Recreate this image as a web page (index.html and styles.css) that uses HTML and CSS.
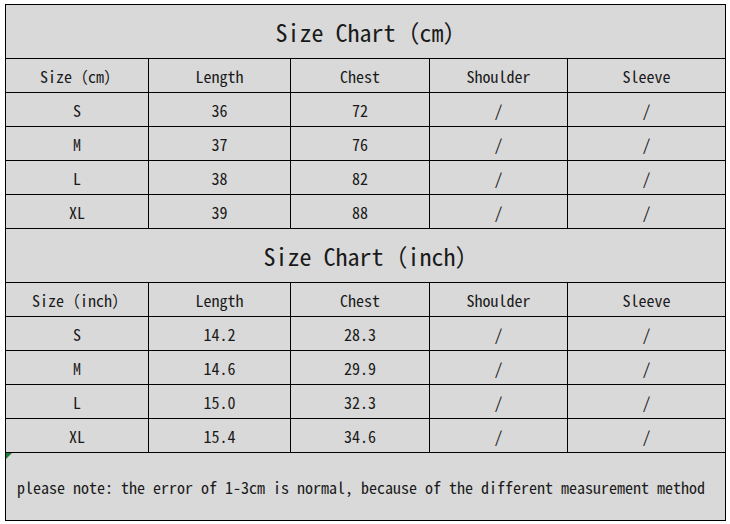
FILE: index.html
```html
<!DOCTYPE html>
<html lang="en">
<head>
<meta charset="utf-8">
<title>Size Chart</title>
<link rel="stylesheet" href="styles.css">
</head>
<body>
<div class="sheet">
<table class="chart">
  <colgroup>
    <col class="c1"><col class="c2"><col class="c3"><col class="c4"><col class="c5">
  </colgroup>
  <tbody>
    <tr class="title"><td colspan="5">Size Chart（cm）</td></tr>
    <tr class="row"><td class="paren">Size（cm）</td><td>Length</td><td>Chest</td><td>Shoulder</td><td>Sleeve</td></tr>
    <tr class="row"><td>S</td><td>36</td><td>72</td><td>/</td><td>/</td></tr>
    <tr class="row"><td>M</td><td>37</td><td>76</td><td>/</td><td>/</td></tr>
    <tr class="row"><td>L</td><td>38</td><td>82</td><td>/</td><td>/</td></tr>
    <tr class="row"><td>XL</td><td>39</td><td>88</td><td>/</td><td>/</td></tr>
    <tr class="title"><td colspan="5">Size Chart（inch）</td></tr>
    <tr class="row"><td class="paren">Size（inch）</td><td>Length</td><td>Chest</td><td>Shoulder</td><td>Sleeve</td></tr>
    <tr class="row"><td>S</td><td>14.2</td><td>28.3</td><td>/</td><td>/</td></tr>
    <tr class="row"><td>M</td><td>14.6</td><td>29.9</td><td>/</td><td>/</td></tr>
    <tr class="row"><td>L</td><td>15.0</td><td>32.3</td><td>/</td><td>/</td></tr>
    <tr class="row"><td>XL</td><td>15.4</td><td>34.6</td><td>/</td><td>/</td></tr>
    <tr class="note"><td colspan="5"><span class="flag"></span>please note: the error of 1-3cm is normal, because of the different measurement method</td></tr>
  </tbody>
</table>
</div>
</body>
</html>
```
FILE: styles.css
```css
html, body {
  margin: 0;
  padding: 0;
  background: #ffffff;
}
.sheet {
  padding: 4px 0 0 5px;
}
.chart {
  border-collapse: collapse;
  table-layout: fixed;
  width: 720px;
  font-family: "Noto Sans Mono CJK SC", "Liberation Mono", "Noto Sans CJK SC", monospace;
  color: #1a1a1a;
}
.c1 { width: 143px; }
.c2 { width: 142px; }
.c3 { width: 139px; }
.c4 { width: 138px; }
.c5 { width: 158px; }
.chart td {
  border: 1px solid #000;
  background: #d9d9d9;
  text-align: center;
  vertical-align: middle;
  padding: 0;
  white-space: nowrap;
}
.title td {
  height: 53px;
  font-size: 24px;
  padding-left: 12px;
}
.row td {
  height: 33px;
  font-size: 16px;
  padding-top: 0;
}
.row td.paren {
  padding-left: 6px;
}
.note td {
  position: relative;
  height: 67px;
  font-size: 16px;
  text-align: left;
  padding-left: 11px;
}
.flag {
  position: absolute;
  left: 0;
  top: 0;
  width: 0;
  height: 0;
  border-top: 6px solid #1f7a3c;
  border-right: 6px solid transparent;
}
```
